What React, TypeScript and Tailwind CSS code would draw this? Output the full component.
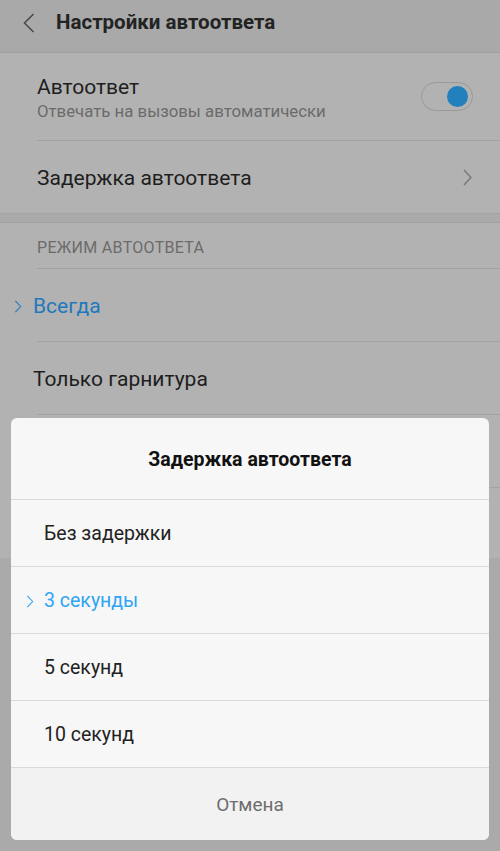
import React from 'react'

const font = { fontFamily: 'Roboto, "Noto Sans", sans-serif' }

const BackIcon = () => (
  <svg width="12" height="20" viewBox="0 0 12 20" fill="none">
    <path d="M10.5 1 L1.5 10 L10.5 19" stroke="#4a4a4a" strokeWidth="1.6" />
  </svg>
)

const Chevron = ({ color, w = 9, h = 17 }: { color: string; w?: number; h?: number }) => (
  <svg width={w} height={h} viewBox="0 0 9 17" fill="none">
    <path d="M1 1 L8 8.5 L1 16" stroke={color} strokeWidth="1.4" />
  </svg>
)

const Toggle = () => (
  <div className="w-[52px] h-[29px] rounded-full border border-[#999] flex items-center justify-end pr-[4px]">
    <div className="w-[21px] h-[21px] rounded-full bg-[#2280bd]" />
  </div>
)

const modes = [
  { label: 'Всегда', active: true },
  { label: 'Только гарнитура', active: false },
]

const delays = [
  { label: 'Без задержки', active: false },
  { label: '3 секунды', active: true },
  { label: '5 секунд', active: false },
  { label: '10 секунд', active: false },
]

export default function App() {
  return (
    <div className="relative w-[500px] h-[851px] overflow-hidden bg-[#aaaaaa]" style={font}>
      {/* шапка */}
      <header className="h-[53px] bg-[#a9a9a9] border-b border-[#a0a0a0]">
        <div className="h-[45px] flex items-center">
          <div className="w-[56px] flex justify-center pl-[2px]">
            <BackIcon />
          </div>
          <h1 className="text-[20.5px] font-bold text-[#232323]">Настройки автоответа</h1>
        </div>
      </header>

      <div className="bg-[#b2b2b2]">
        <div className="h-[87px] flex items-center pl-[37px] pr-[27px]">
          <div className="flex-1 pt-[2px]">
            <div className="text-[21px] leading-[26px] text-[#1e1e1e]">Автоответ</div>
            <div className="text-[16.8px] leading-[22px] text-[#6b6b6b]">Отвечать на вызовы автоматически</div>
          </div>
          <Toggle />
        </div>
        <div className="ml-[37px] border-t border-[#a2a2a2]" />
        <div className="h-[72px] flex items-center pl-[37px] pr-[28px]">
          <span className="flex-1 pt-[3px] text-[21px] text-[#1e1e1e]">Задержка автоответа</span>
          <Chevron color="#777" />
        </div>
      </div>

      <div className="h-[10px] bg-[#aaaaaa] border-t border-[#a4a4a4] border-b border-b-[#a2a2a2]" />

      <div className="bg-[#b2b2b2]">
        <div className="h-[45px] flex items-center pl-[37px] pt-[5px] text-[16px] text-[#6b6b6b] tracking-[0.3px]">
          РЕЖИМ АВТООТВЕТА
        </div>
        {modes.map((m) => (
          <div key={m.label}>
            <div className="ml-[37px] border-t border-[#a2a2a2]" />
            <div className="h-[72px] flex items-center">
              <div className="w-[33px] flex justify-center pl-[3px] pt-[3px]">
                {m.active && <Chevron color="#2079bf" w={8} h={13} />}
              </div>
              <span className={`pt-[3px] text-[21px] ${m.active ? 'text-[#2079bf]' : 'text-[#1e1e1e]'}`}>{m.label}</span>
            </div>
          </div>
        ))}
        {/* ещё два пункта под диалогом */}
        <div className="ml-[37px] border-t border-[#a2a2a2]" />
        <div className="h-[72px]" />
        <div className="ml-[37px] border-t border-[#a2a2a2]" />
        <div className="h-[70px]" />
      </div>

      {/* диалог выбора задержки */}
      <div className="absolute left-[11px] top-[418px] w-[478px] h-[422px] rounded-[6px] bg-[#f7f7f7] overflow-hidden flex flex-col">
        <div className="h-[81px] flex items-center justify-center pt-[2px] text-[19.5px] font-bold text-[#111]">
          Задержка автоответа
        </div>
        {delays.map((d) => (
          <div key={d.label} className="h-[67px] border-t border-[#dadada] flex items-center pt-[2px]">
            <div className="w-[33px] flex justify-start pl-[15px]">
              {d.active && <Chevron color="#2ea5f5" w={8} h={13} />}
            </div>
            <span className={`text-[19.5px] ${d.active ? 'text-[#2ea5f5]' : 'text-[#222]'}`}>{d.label}</span>
          </div>
        ))}
        <div className="flex-1 border-t border-[#dadada] bg-[#f2f2f2] flex items-center justify-center pt-[2px] text-[19px] text-[#6d6d6d]">
          Отмена
        </div>
      </div>
    </div>
  )
}
